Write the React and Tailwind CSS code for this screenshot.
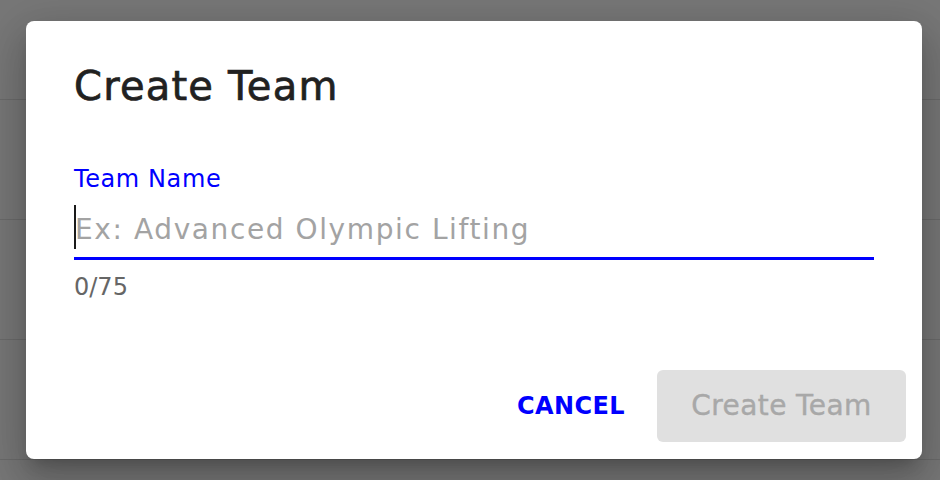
import React from "react";

const font = "font-['DejaVu_Sans','Liberation_Sans',sans-serif]";

export default function App() {
  const rows = [0, 1, 2, 3];

  return (
    <div className={`relative w-[940px] h-[480px] overflow-hidden bg-[#777777] ${font}`}>
      {/* page content behind the dimmed overlay */}
      <div className="flex flex-col">
        <div className="h-[100px] border-b border-[#6a6a6a]" />
        {rows.map((r) => (
          <div key={r} className="h-[120px] border-b border-[#6a6a6a]" />
        ))}
      </div>

      {/* Dialog */}
      <div className="absolute left-[26px] top-[21px] w-[896px] h-[438px] flex flex-col rounded-[8px] bg-white shadow-[0_11px_15px_-7px_rgba(0,0,0,0.2),0_24px_38px_3px_rgba(0,0,0,0.14),0_9px_46px_8px_rgba(0,0,0,0.12)]">
        <h2 className="mt-[41px] px-[48px] text-[40px] leading-[48px] tracking-[1.2px] font-normal text-[#212121] [-webkit-text-stroke:0.7px_#212121]">
          Create Team
        </h2>

        <div className="mt-[55px] px-[48px] flex flex-col">
          <label className="text-[24px] leading-[28px] tracking-[0.6px] text-[#0000ff]">
            Team Name
          </label>

          <div className="mt-[12px] h-[55px] flex items-start border-b-[3px] border-[#0000ff]">
            <span className="w-[2px] h-[44px] bg-[#1a1a1a]" />
            <span className="-ml-[1px] mt-[9px] text-[28px] leading-[32px] tracking-[1.6px] text-[#a3a3a3] whitespace-nowrap">
              Ex: Advanced Olympic Lifting
            </span>
          </div>

          <p className="mt-[13px] text-[24px] leading-[28px] text-[#666666]">
            0/75
          </p>
        </div>

        <div className="mt-auto pr-[16px] pb-[17px] flex justify-end items-center gap-[32px]">
          <button className="text-[24px] leading-[28px] font-bold tracking-[0.4px] text-[#0000ff]">
            CANCEL
          </button>
          <button
            disabled
            className="h-[72px] w-[249px] flex items-center justify-center rounded-[6px] bg-[#e0e0e0] text-[28px] tracking-[0.4px] text-[#a8a8a8] [-webkit-text-stroke:0.4px_#a8a8a8]"
          >
            Create Team
          </button>
        </div>
      </div>
    </div>
  );
}
